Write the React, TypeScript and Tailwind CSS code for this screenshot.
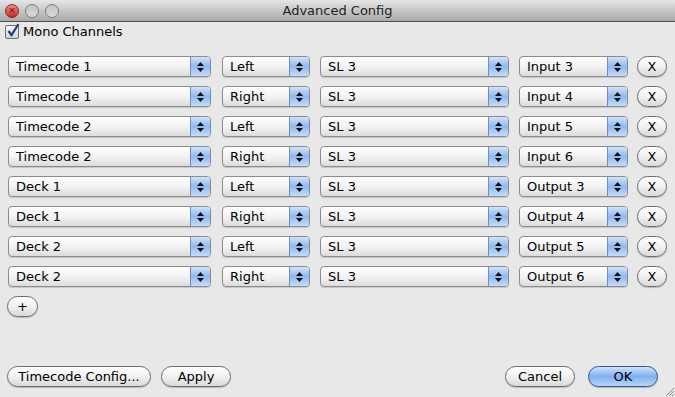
const rows = [
  ["Timecode 1", "Left", "SL 3", "Input 3"],
  ["Timecode 1", "Right", "SL 3", "Input 4"],
  ["Timecode 2", "Left", "SL 3", "Input 5"],
  ["Timecode 2", "Right", "SL 3", "Input 6"],
  ["Deck 1", "Left", "SL 3", "Output 3"],
  ["Deck 1", "Right", "SL 3", "Output 4"],
  ["Deck 2", "Left", "SL 3", "Output 5"],
  ["Deck 2", "Right", "SL 3", "Output 6"],
];

function Select({ label, width }: { label: string; width: string }) {
  return (
    <div
      className={`${width} flex h-[21px] shrink-0 overflow-hidden rounded-[4px] border border-[#8c8c8c] bg-gradient-to-b from-[#ffffff] via-[#f3f3f3] to-[#dcdcdc] shadow-[0_1px_1px_rgba(0,0,0,0.15)]`}
    >
      <span className="flex-1 truncate pl-[7px] leading-[19px]">{label}</span>
      <span className="flex w-[20px] flex-col items-center justify-center gap-[2px] border-l border-[#6f8fc0] bg-gradient-to-b from-[#d0e3fb] via-[#8fb9f0] to-[#c4ddfb]">
        <svg width="7" height="4" viewBox="0 0 7 4">
          <path d="M3.5 0 L7 4 L0 4 Z" fill="#111" />
        </svg>
        <svg width="7" height="4" viewBox="0 0 7 4">
          <path d="M0 0 L7 0 L3.5 4 Z" fill="#111" />
        </svg>
      </span>
    </div>
  );
}

function PillButton({
  children,
  className,
}: {
  children: React.ReactNode;
  className: string;
}) {
  return (
    <button
      className={`flex h-[21px] items-center justify-center rounded-full border border-[#6d6d6d] bg-gradient-to-b from-[#ffffff] via-[#f1f1f1] to-[#d9d9d9] shadow-[0_1px_1px_rgba(0,0,0,0.2)] ${className}`}
    >
      {children}
    </button>
  );
}

function Light({ color }: { color: string }) {
  return (
    <span
      className={`h-[14px] w-[14px] rounded-full border border-[#7a7a7a] ${color}`}
    />
  );
}

export default function App() {
  return (
    <div
      className="relative flex h-[397px] w-[675px] flex-col overflow-hidden bg-[#e8e8e8] text-[13px] text-black"
      style={{ fontFamily: '"DejaVu Sans", "Liberation Sans", sans-serif' }}
    >
      {/* Title bar */}
      <div className="relative flex h-[22px] shrink-0 items-center border-b border-[#515151] bg-gradient-to-b from-[#e6e6e6] to-[#a9a9a9]">
        <div className="flex gap-[6px] pl-[5px]">
          <span className="flex h-[14px] w-[14px] items-center justify-center rounded-full border border-[#8a2a2a] bg-gradient-to-b from-[#e88a8a] to-[#c82020] text-[9px] leading-none text-[#6a0b0b]">
            ×
          </span>
          <Light color="bg-gradient-to-b from-[#c4c4c4] to-[#dadada]" />
          <Light color="bg-gradient-to-b from-[#c4c4c4] to-[#dadada]" />
        </div>
        <span className="absolute left-0 right-0 text-center text-[13px] text-[#222]">
          Advanced Config
        </span>
      </div>

      {/* Mono checkbox */}
      <label className="mt-[3px] flex h-[14px] items-center gap-[4px] pl-[5px]">
        <span className="relative h-[14px] w-[14px] rounded-[2px] border border-[#6f6f6f] bg-gradient-to-b from-[#f8f8f8] to-[#d5d5d5]">
          <svg
            className="absolute -top-[3px] left-[1px]"
            width="13"
            height="14"
            viewBox="0 0 13 14"
          >
            <path
              d="M1.5 8 L4.5 12 L11.5 1"
              stroke="#1d3f8a"
              strokeWidth="2.2"
              fill="none"
            />
          </svg>
        </span>
        <span>Mono Channels</span>
      </label>

      {/* Channel rows */}
      <div className="mt-[17px] flex flex-col gap-[9px] pl-[8px]">
        {rows.map((r, i) => (
          <div key={i} className="flex items-center">
            <Select label={r[0]} width="w-[203px]" />
            <div className="w-[11px]" />
            <Select label={r[1]} width="w-[88px]" />
            <div className="w-[10px]" />
            <Select label={r[2]} width="w-[189px]" />
            <div className="w-[10px]" />
            <Select label={r[3]} width="w-[109px]" />
            <div className="w-[9px]" />
            <PillButton className="w-[30px] text-[13px]">X</PillButton>
          </div>
        ))}
      </div>

      <div className="mt-[9px] pl-[7px]">
        <PillButton className="h-[19px] w-[31px] text-[13px]">+</PillButton>
      </div>

      {/* Bottom buttons */}
      <div className="mt-auto mb-[10px] flex items-center pl-[7px]">
        <PillButton className="w-[144px]">Timecode Config...</PillButton>
        <PillButton className="ml-[10px] w-[70px]">Apply</PillButton>
        <div className="flex-1" />
        <PillButton className="w-[70px]">Cancel</PillButton>
        <button className="ml-[13px] mr-[17px] flex h-[21px] w-[70px] items-center justify-center rounded-full border border-[#36578f] bg-gradient-to-b from-[#cfe2fb] via-[#7fb0ee] to-[#b7d6fa] shadow-[0_1px_1px_rgba(0,0,0,0.25)]">
          OK
        </button>
      </div>

      {/* Resize grip */}
      <svg
        className="absolute bottom-0 right-0"
        width="12"
        height="12"
        viewBox="0 0 12 12"
      >
        <path
          d="M11 3 L3 11 M11 6 L6 11 M11 9 L9 11"
          stroke="#8a8a8a"
          strokeWidth="1"
        />
      </svg>
    </div>
  );
}
